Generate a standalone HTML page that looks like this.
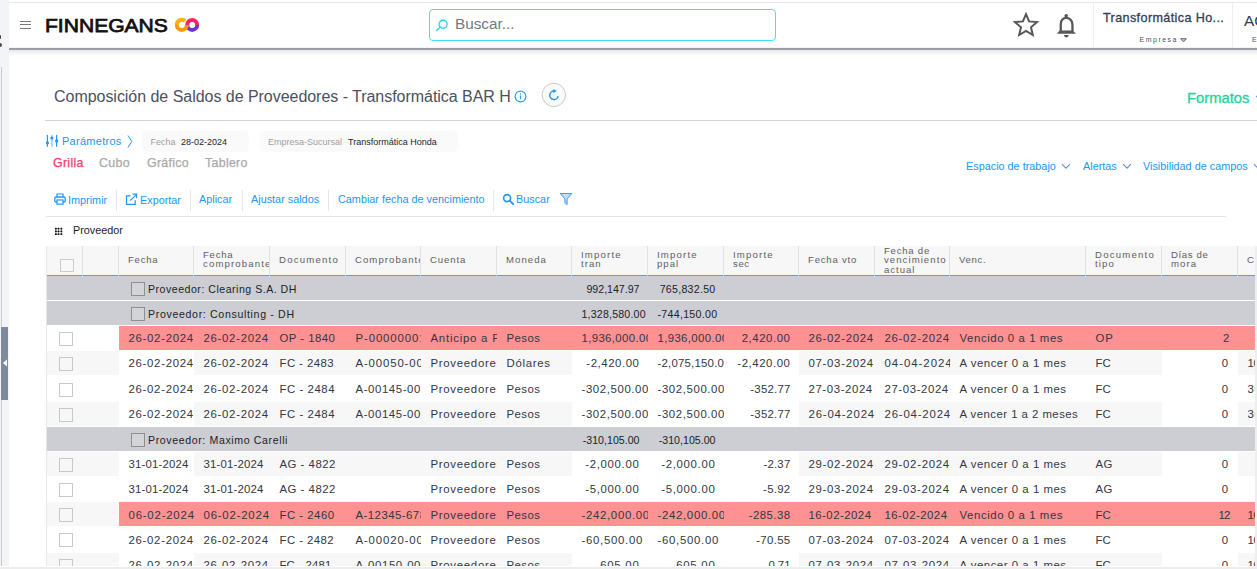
<!DOCTYPE html>
<html><head><meta charset="utf-8">
<style>
*{box-sizing:border-box;margin:0;padding:0}
html,body{width:1257px;height:569px;overflow:hidden;background:#fff;font-family:"Liberation Sans",sans-serif;position:relative}
.a{position:absolute}
#strip{position:absolute;left:0;top:0;width:9px;height:569px;background:#f3f4f8}
#stripline{position:absolute;left:1px;top:67px;width:1px;height:502px;background:#c9c9cc}
#tab{position:absolute;left:1px;top:327px;width:7px;height:73px;background:#7e8b9c}
#hdr{position:absolute;left:9px;top:0;width:1248px;height:48px;background:#fff;border-top:2px solid #fff}
#hdrtop{position:absolute;left:9px;top:2px;width:1248px;height:1px;background:#e5e7ef}
#hdrbot{position:absolute;left:9px;top:48px;width:1248px;height:2px;background:#9a9ea7;box-shadow:0 -1px 1px #f3f3f5}
#hdrshadow{position:absolute;left:9px;top:50px;width:1248px;height:6px;background:linear-gradient(#e9e9eb,#fff)}
.ham{position:absolute;left:20px;width:11px;height:1px;background:#7a7a7a}
#logo{position:absolute;left:44.5px;top:15.5px;font-weight:400;font-size:18px;color:#111;-webkit-text-stroke:.75px #111;line-height:20px;transform:scaleX(1.17);transform-origin:0 0}
#search{position:absolute;left:429px;top:9px;width:347px;height:32px;border:1px solid #3fe0f6;border-radius:4px}
#searchtxt{position:absolute;left:455px;top:14.8px;font-size:15.3px;letter-spacing:0;color:#737983;line-height:17px}
.vdiv{position:absolute;top:3px;width:1px;height:45px;background:#eceef2}
#comp{position:absolute;left:1103px;top:11px;font-size:12.6px;font-weight:400;letter-spacing:.38px;-webkit-text-stroke:.3px #333d52;color:#333d52;line-height:14px;white-space:nowrap}
#emp{position:absolute;left:1139.5px;top:36px;font-size:7px;color:#4a5163;letter-spacing:1.5px;line-height:8px}
#title{position:absolute;left:54px;top:88px;font-size:16px;letter-spacing:-.035px;color:#4a5160;line-height:18px;white-space:nowrap}
#titleline{position:absolute;left:45px;top:120px;width:1212px;height:1px;background:#d3d6dc}
#formatos{position:absolute;left:1187px;top:89.5px;font-size:14.8px;color:#1fd39c;line-height:16px;-webkit-text-stroke:.3px #1fd39c}
.link{position:absolute;color:#2196f3;font-size:10.85px;line-height:13px;white-space:nowrap}
.chip{position:absolute;top:131px;height:21px;background:#fafafa;border-radius:5px}
.chiplbl{position:absolute;top:137px;font-size:9px;color:#a0a0a0;line-height:11px;white-space:nowrap}
.chipval{position:absolute;top:137px;font-size:9px;color:#262626;line-height:11px;white-space:nowrap}
.tabt{position:absolute;top:155.7px;font-size:12.4px;color:#a9a9a9;line-height:14px;letter-spacing:.3px;-webkit-text-stroke:.25px currentColor}
.tsep{position:absolute;top:190px;width:1px;height:21px;background:#e6e6e6}
#tbline{position:absolute;left:46px;top:216px;width:1180px;height:1px;background:#e4e4e4}
#prov{position:absolute;left:73px;top:224.2px;font-size:10.8px;color:#1e1e1e;line-height:13px}
/* table */
#tbl{position:absolute;left:0;top:0;width:1255px;height:566px;overflow:hidden}
#tleft{position:absolute;left:46px;top:246px;width:1px;height:320px;background:#e8e8e8}
.thead{position:absolute;background:#f7f7f7}
.hsep{position:absolute;top:246px;width:1px;height:29px;background:#e2e2e5}
#cyan{position:absolute;left:47px;top:275px;width:1210px;height:2px;background:#14bdf0}
.hcb{position:absolute;width:14px;height:13px;border:1px solid #cbcbcf;background:#f9f9f9}
.hcell{position:absolute;font-size:9.6px;color:#606060;line-height:9.7px;white-space:nowrap;overflow:hidden}
.hcell.l1{top:254.9px}
.hcell.l2{top:249.7px}
.hcell.l3{top:245.6px}
.grow{position:absolute;left:47px;width:1210px;height:23.7px;background:#cdced3}
.gcb{position:absolute;left:84px;top:6px;width:14px;height:14px;border:1px solid #8f8f92;background:#d3d4d8}
.gtxt{position:absolute;left:101px;top:7.2px;font-size:10.6px;color:#202226;line-height:13px;white-space:nowrap}
.gnum{position:absolute;height:23.7px;font-size:11px;color:#202226;line-height:13px;padding-top:7.5px;text-align:right;letter-spacing:.3px;white-space:nowrap}
.drow{position:absolute;left:47px;width:1210px;height:24.09px}
.redbg{position:absolute;left:119px;width:1138px;height:24.09px;background:#fe9191}
.wcol{position:absolute;height:24.09px;background:#fff}
.rcb{position:absolute;left:59px;width:14px;height:14px;border:1px solid #c8c8cc}
.dcell{position:absolute;height:24.09px;overflow:hidden;white-space:nowrap;font-size:11.4px;color:#323843;line-height:13px;padding:5.6px 8.5px 0 9.5px}
.dcell.gn{font-size:10.6px;color:#202226;padding-top:7.2px}
.dcell.r{text-align:right}
</style></head><body>
<div id="strip"></div>
<div id="stripline"></div>
<div id="tab"></div>
<svg class="a" style="left:2px;top:358px" width="6" height="10"><path d="M1 5 L5 1.5 L5 8.5 Z" fill="#fff"/></svg>
<div class="a" style="left:0;top:34.5px;width:1.4px;height:4px;background:#444;border-radius:0 1px 1px 0"></div>
<div class="a" style="left:0;top:42.5px;width:2px;height:4.5px;background:#5a4444;border-radius:0 2px 2px 0"></div>

<div id="hdr"></div>
<div id="hdrtop"></div>
<div id="hdrbot"></div>
<div id="hdrshadow"></div>
<div class="ham" style="top:21px"></div>
<div class="ham" style="top:24px"></div>
<div class="ham" style="top:28px"></div>
<div id="logo">FINNEGANS</div>
<svg class="a" style="left:170px;top:12px" width="32" height="26" viewBox="0 0 32 26">
  <path d="M17.2 12.9 A5 5 0 0 1 27.2 12.9" fill="none" stroke="#f4246b" stroke-width="4"/>
  <path d="M27.2 12.9 A5 5 0 0 1 17.2 12.9" fill="none" stroke="#6c37d0" stroke-width="4"/>
  <path d="M15.1 9.1 A5 5 0 0 0 6.8 12.9" fill="none" stroke="#ffb300" stroke-width="4"/>
  <path d="M6.8 12.9 A5 5 0 0 0 16.8 12.9" fill="none" stroke="#ff9800" stroke-width="4"/>
</svg>

<div id="search"></div>
<svg class="a" style="left:435px;top:19px" width="14" height="14" viewBox="0 0 14 14">
  <circle cx="8.1" cy="5.2" r="4" fill="none" stroke="#22d2f5" stroke-width="1.35"/>
  <path d="M5.2 8.2 L1.5 11.6" stroke="#22d2f5" stroke-width="1.35" stroke-linecap="round"/>
</svg>
<div id="searchtxt">Buscar...</div>

<svg class="a" style="left:1012px;top:11.8px" width="28" height="27" viewBox="0 0 28 27">
  <path d="M14 2.2 L17.1 9.4 L25 10.1 L19 15.3 L20.8 23 L14 19 L7.2 23 L9 15.3 L3 10.1 L10.9 9.4 Z" fill="none" stroke="#565656" stroke-width="2" stroke-linejoin="miter"/>
</svg>
<svg class="a" style="left:1050px;top:8px" width="32" height="34" viewBox="0 0 32 34">
  <circle cx="16.2" cy="7.7" r="1.8" fill="#575757"/>
  <path d="M10.75 23.5 V16.2 C10.75 12.3 13.2 9.9 16.2 9.9 C19.2 9.9 22.45 12.3 22.45 16.2 V23.5" fill="none" stroke="#575757" stroke-width="2.3"/>
  <path d="M9.6 22.6 H22.8 L26 25.7 H6.9 Z" fill="#575757"/>
  <path d="M13.9 27.1 H18.7 A2.4 2.3 0 0 1 13.9 27.1 Z" fill="#575757"/>
</svg>
<div class="vdiv" style="left:1093px"></div>
<div class="vdiv" style="left:1232px"></div>
<div id="comp">Transformática Ho...</div>
<div id="emp">Empresa</div>
<svg class="a" style="left:1180px;top:37.5px" width="7" height="4.5" viewBox="0 0 7 4.5"><path d="M0.6 0.7 H6.4 L3.5 3.9 Z" fill="#c5c8ce" stroke="#444c5e" stroke-width="0.8"/></svg>
<div class="a" style="left:1244px;top:12px;font-size:15.3px;color:#2e3850;line-height:17px">AC</div>
<div class="a" style="left:1252px;top:36px;font-size:7px;color:#4a5163;line-height:8px">E</div>

<div id="title">Composición de Saldos de Proveedores - Transformática BAR H</div>
<svg class="a" style="left:514px;top:90px" width="13" height="13" viewBox="0 0 13 13">
  <circle cx="6.5" cy="6.5" r="5.4" fill="none" stroke="#2f9cf0" stroke-width="1.2"/>
  <rect x="5.9" y="5.4" width="1.2" height="4" fill="#2f9cf0"/>
  <rect x="5.9" y="3.3" width="1.2" height="1.2" fill="#2f9cf0"/>
</svg>
<svg class="a" style="left:541px;top:82px" width="26" height="26" viewBox="0 0 26 26">
  <circle cx="12.8" cy="12.9" r="11.7" fill="#fafafa" stroke="#cacaca" stroke-width="1"/>
  <path d="M13 9.1 A4.2 4.2 0 1 0 17.14 14.03" fill="none" stroke="#2196f3" stroke-width="1.5"/>
  <path d="M12.4 7.1 L15.9 9.1 L12.4 11.1 Z" fill="#2196f3"/>
</svg>
<div id="titleline"></div>
<div id="formatos">Formatos</div>
<svg class="a" style="left:1255px;top:94px" width="8" height="8"><path d="M1 2 L4 5 L7 2" fill="none" stroke="#6a9fd0" stroke-width="1.2"/></svg>

<!-- parametros -->
<svg class="a" style="left:45px;top:134px" width="14" height="14" viewBox="0 0 14 14">
  <g stroke="#2196f3" stroke-width="1.2">
    <path d="M2.4 1 V12.8"/><path d="M11.6 1 V12.8"/>
  </g>
  <path d="M6.9 1 V12.8" stroke="#8fc6f7" stroke-width="1.4"/>
  <g fill="#2196f3">
    <circle cx="2.4" cy="8.8" r="1.6"/><circle cx="6.9" cy="4" r="1.6"/><circle cx="11.6" cy="6.9" r="1.6"/>
  </g>
</svg>
<div class="link" style="left:62px;top:134.6px;font-size:11px;letter-spacing:.28px">Parámetros</div>
<svg class="a" style="left:126.5px;top:135px" width="6" height="13"><path d="M1 0.5 L4.8 6.5 L1 12.5" fill="none" stroke="#2196f3" stroke-width="1"/></svg>
<div class="chip" style="left:142px;width:107px"></div>
<div class="chiplbl" style="left:150.5px">Fecha</div>
<div class="chipval" style="left:181px">28-02-2024</div>
<div class="chip" style="left:260px;width:198px"></div>
<div class="chiplbl" style="left:268px">Empresa-Sucursal</div>
<div class="chipval" style="left:348px">Transformática Honda</div>

<div class="tabt" style="left:53px;color:#f23d6c">Grilla</div>
<div class="tabt" style="left:99px">Cubo</div>
<div class="tabt" style="left:147px">Gráfico</div>
<div class="tabt" style="left:205px">Tablero</div>

<div class="link" style="left:966px;top:160px">Espacio de trabajo</div>
<svg class="a" style="left:1061px;top:163px" width="10" height="7"><path d="M1 1.2 L5 5.2 L9 1.2" fill="none" stroke="#5f93c8" stroke-width="1.1"/></svg>
<div class="link" style="left:1083px;top:160px">Alertas</div>
<svg class="a" style="left:1122px;top:163px" width="10" height="7"><path d="M1 1.2 L5 5.2 L9 1.2" fill="none" stroke="#5f93c8" stroke-width="1.1"/></svg>
<div class="link" style="left:1143px;top:160px">Visibilidad de campos</div>
<svg class="a" style="left:1253px;top:163px" width="10" height="7"><path d="M1 1.2 L5 5.2 L9 1.2" fill="none" stroke="#5f93c8" stroke-width="1.1"/></svg>

<!-- toolbar -->
<svg class="a" style="left:54px;top:193px" width="12" height="12" viewBox="0 0 12 12">
  <path d="M3 4 V1 H9 V4" fill="none" stroke="#2196f3" stroke-width="1.2"/>
  <rect x="0.8" y="4" width="10.4" height="5" rx="1.2" fill="none" stroke="#2196f3" stroke-width="1.3"/>
  <rect x="3" y="7" width="6" height="4.2" fill="#fff" stroke="#2196f3" stroke-width="1.2"/>
</svg>
<div class="link" style="left:68px;top:194px">Imprimir</div>
<div class="tsep" style="left:116px"></div>
<svg class="a" style="left:125px;top:193px" width="13" height="13" viewBox="0 0 13 13">
  <path d="M5.6 2.8 H1.5 V11.4 H10.2 V7.2" fill="none" stroke="#2196f3" stroke-width="1.2"/>
  <path d="M5.2 7.6 L11 1.8" stroke="#2196f3" stroke-width="1.2"/>
  <path d="M7.6 1.2 H11.6 V5.2" fill="none" stroke="#2196f3" stroke-width="1.2"/>
</svg>
<div class="link" style="left:140px;top:194px">Exportar</div>
<div class="tsep" style="left:190px"></div>
<div class="link" style="left:199px;top:193px">Aplicar</div>
<div class="tsep" style="left:242px"></div>
<div class="link" style="left:251px;top:193px">Ajustar saldos</div>
<div class="tsep" style="left:328px"></div>
<div class="link" style="left:338px;top:193px">Cambiar fecha de vencimiento</div>
<div class="tsep" style="left:493px"></div>
<svg class="a" style="left:502px;top:193px" width="13" height="13" viewBox="0 0 13 13">
  <circle cx="5.1" cy="5.1" r="3.5" fill="none" stroke="#2196f3" stroke-width="1.6"/>
  <path d="M7.7 7.7 L11.2 11.2" stroke="#2196f3" stroke-width="1.8" stroke-linecap="round"/>
</svg>
<div class="link" style="left:516px;top:193px">Buscar</div>
<svg class="a" style="left:559px;top:192px" width="14" height="14" viewBox="0 0 14 14">
  <path d="M1.2 1.5 H12.8 L8.1 6.9 V12.6 L5.9 10.7 V6.9 Z" fill="#c2ddf8" stroke="#3a9bf0" stroke-width="1" stroke-linejoin="round"/>
</svg>
<div id="tbline"></div>

<svg class="a" style="left:52px;top:224px" width="14" height="14" viewBox="0 0 14 14">
  <g stroke="#c4c4c4" stroke-width="0.9"><path d="M3.8 4.6 H9.4 M3.8 7.4 H9.4 M3.8 10.1 H9.4 M3.8 4.6 V10.1 M6.5 4.6 V10.1 M9.4 4.6 V10.1"/></g>
  <g fill="#111">
    <rect x="2.9" y="3.7" width="1.9" height="1.8" rx=".5"/><rect x="5.6" y="3.7" width="1.8" height="1.8" rx=".5"/><rect x="8.5" y="3.7" width="1.8" height="1.8" rx=".5"/>
    <rect x="2.9" y="6.5" width="1.9" height="1.8" rx=".5"/><rect x="5.6" y="6.5" width="1.8" height="1.8" rx=".5"/><rect x="8.5" y="6.5" width="1.8" height="1.8" rx=".5"/>
    <rect x="2.9" y="9.2" width="1.9" height="1.9" rx=".5"/><rect x="5.6" y="9.2" width="1.8" height="1.9" rx=".5"/><rect x="8.5" y="9.2" width="1.8" height="1.9" rx=".5"/>
  </g>
</svg>
<div id="prov">Proveedor</div>

<div id="tbl">
<div id="tleft"></div>
<div id="cyan"></div>
<div class="thead" style="left:46.5px;top:246px;width:1210px;height:29px"></div>
<div class="hcb" style="left:60px;top:259px"></div>
<div class="hsep" style="left:82.00px"></div>
<div class="a" style="left:82.00px;top:275px;width:1px;height:1.6px;background:#a8dcef;z-index:2"></div>
<div class="hcell l1" style="left:92.00px;width:26.00px"></div>
<div class="hsep" style="left:118.00px"></div>
<div class="a" style="left:118.00px;top:275px;width:1px;height:1.6px;background:#a8dcef;z-index:2"></div>
<div class="hcell l1" style="left:128.00px;width:65.00px"><span style="letter-spacing:0.74px">Fecha</span></div>
<div class="hsep" style="left:193.00px"></div>
<div class="a" style="left:193.00px;top:275px;width:1px;height:1.6px;background:#a8dcef;z-index:2"></div>
<div class="hcell l2" style="left:203.00px;width:66.00px"><span style="letter-spacing:0.74px">Fecha</span><br><span style="letter-spacing:1.13px">comprobante</span></div>
<div class="hsep" style="left:269.00px"></div>
<div class="a" style="left:269.00px;top:275px;width:1px;height:1.6px;background:#a8dcef;z-index:2"></div>
<div class="hcell l1" style="left:279.00px;width:66.00px"><span style="letter-spacing:1.21px">Documento</span></div>
<div class="hsep" style="left:345.00px"></div>
<div class="a" style="left:345.00px;top:275px;width:1px;height:1.6px;background:#a8dcef;z-index:2"></div>
<div class="hcell l1" style="left:355.00px;width:65.00px"><span style="letter-spacing:1.05px">Comprobante</span></div>
<div class="hsep" style="left:420.00px"></div>
<div class="a" style="left:420.00px;top:275px;width:1px;height:1.6px;background:#a8dcef;z-index:2"></div>
<div class="hcell l1" style="left:430.00px;width:66.00px"><span style="letter-spacing:0.88px">Cuenta</span></div>
<div class="hsep" style="left:496.00px"></div>
<div class="a" style="left:496.00px;top:275px;width:1px;height:1.6px;background:#a8dcef;z-index:2"></div>
<div class="hcell l1" style="left:506.00px;width:65.00px"><span style="letter-spacing:1.04px">Moneda</span></div>
<div class="hsep" style="left:571.00px"></div>
<div class="a" style="left:571.00px;top:275px;width:1px;height:1.6px;background:#a8dcef;z-index:2"></div>
<div class="hcell l2" style="left:581.00px;width:66.00px"><span style="letter-spacing:1.19px">Importe</span><br><span style="letter-spacing:1.01px">tran</span></div>
<div class="hsep" style="left:647.00px"></div>
<div class="a" style="left:647.00px;top:275px;width:1px;height:1.6px;background:#a8dcef;z-index:2"></div>
<div class="hcell l2" style="left:657.00px;width:66.00px"><span style="letter-spacing:1.19px">Importe</span><br><span style="letter-spacing:1.03px">ppal</span></div>
<div class="hsep" style="left:723.00px"></div>
<div class="a" style="left:723.00px;top:275px;width:1px;height:1.6px;background:#a8dcef;z-index:2"></div>
<div class="hcell l2" style="left:733.00px;width:65.00px"><span style="letter-spacing:1.19px">Importe</span><br><span style="letter-spacing:0.58px">sec</span></div>
<div class="hsep" style="left:798.00px"></div>
<div class="a" style="left:798.00px;top:275px;width:1px;height:1.6px;background:#a8dcef;z-index:2"></div>
<div class="hcell l1" style="left:808.00px;width:66.00px"><span style="letter-spacing:0.77px">Fecha vto</span></div>
<div class="hsep" style="left:874.00px"></div>
<div class="a" style="left:874.00px;top:275px;width:1px;height:1.6px;background:#a8dcef;z-index:2"></div>
<div class="hcell l3" style="left:884.00px;width:65.00px"><span style="letter-spacing:0.75px">Fecha de</span><br><span style="letter-spacing:1.05px">vencimiento</span><br><span style="letter-spacing:0.95px">actual</span></div>
<div class="hsep" style="left:949.00px"></div>
<div class="a" style="left:949.00px;top:275px;width:1px;height:1.6px;background:#a8dcef;z-index:2"></div>
<div class="hcell l1" style="left:959.00px;width:126.00px"><span style="letter-spacing:0.67px">Venc.</span></div>
<div class="hsep" style="left:1085.00px"></div>
<div class="a" style="left:1085.00px;top:275px;width:1px;height:1.6px;background:#a8dcef;z-index:2"></div>
<div class="hcell l2" style="left:1095.00px;width:66.00px"><span style="letter-spacing:1.21px">Documento</span><br><span style="letter-spacing:1.16px">tipo</span></div>
<div class="hsep" style="left:1161.00px"></div>
<div class="a" style="left:1161.00px;top:275px;width:1px;height:1.6px;background:#a8dcef;z-index:2"></div>
<div class="hcell l2" style="left:1171.00px;width:66.00px"><span style="letter-spacing:0.63px">Días de</span><br><span style="letter-spacing:1.09px">mora</span></div>
<div class="hsep" style="left:1237.00px"></div>
<div class="a" style="left:1237.00px;top:275px;width:1px;height:1.6px;background:#a8dcef;z-index:2"></div>
<div class="hcell l1" style="left:1247.00px;width:66.00px"><span style="letter-spacing:0.08px">C</span></div>
<div class="grow" style="top:276.00px"><span class="gcb"></span><span class="gtxt"><span style="letter-spacing:0.50px">Proveedor: Clearing S.A. DH</span></span></div>
<div class="dcell r gn" style="top:276.00px;left:572.00px;width:76.00px"><span style="letter-spacing:0.00px">992,147.97</span></div>
<div class="dcell r gn" style="top:276.00px;left:648.00px;width:76.00px"><span style="letter-spacing:0.28px">765,832.50</span></div>
<div class="grow" style="top:301.14px"><span class="gcb"></span><span class="gtxt"><span style="letter-spacing:0.66px">Proveedor: Consulting - DH</span></span></div>
<div class="dcell r gn" style="top:301.14px;left:572.00px;width:76.00px"><span style="letter-spacing:0.20px">1,328,580.00</span></div>
<div class="dcell r gn" style="top:301.14px;left:648.00px;width:76.00px"><span style="letter-spacing:0.30px">-744,150.00</span></div>
<div class="drow" style="top:326.28px;background:#ffffff"></div>
<div class="redbg" style="top:326.28px"></div>
<div class="rcb" style="top:332.28px"></div>
<div class="dcell k2" style="top:326.28px;left:119.00px;width:75.00px;padding-top:6.02px"><span style="letter-spacing:0.70px">26-02-2024</span></div>
<div class="dcell k3" style="top:326.28px;left:194.00px;width:76.00px;padding-top:6.02px"><span style="letter-spacing:0.70px">26-02-2024</span></div>
<div class="dcell k4" style="top:326.28px;left:270.00px;width:76.00px;padding-top:6.02px"><span style="letter-spacing:0.46px">OP - 1840</span></div>
<div class="dcell k5" style="top:326.28px;left:346.00px;width:75.00px;padding-top:6.02px"><span style="letter-spacing:0.89px">P-00000001</span></div>
<div class="dcell k6" style="top:326.28px;left:421.00px;width:76.00px;padding-top:6.02px"><span style="letter-spacing:0.77px">Anticipo a Proveedores</span></div>
<div class="dcell k7" style="top:326.28px;left:497.00px;width:75.00px;padding-top:6.02px"><span style="letter-spacing:0.45px">Pesos</span></div>
<div class="dcell r k8" style="top:326.28px;left:572.00px;width:76.00px;padding-top:6.02px"><span style="letter-spacing:0.36px">1,936,000.00</span></div>
<div class="dcell r k9" style="top:326.28px;left:648.00px;width:76.00px;padding-top:6.02px"><span style="letter-spacing:0.36px">1,936,000.00</span></div>
<div class="dcell r k10" style="top:326.28px;left:724.00px;width:75.00px;padding-top:6.02px"><span style="letter-spacing:0.56px">2,420.00</span></div>
<div class="dcell k11" style="top:326.28px;left:799.00px;width:76.00px;padding-top:6.02px"><span style="letter-spacing:0.70px">26-02-2024</span></div>
<div class="dcell k12" style="top:326.28px;left:875.00px;width:75.00px;padding-top:6.02px"><span style="letter-spacing:0.70px">26-02-2024</span></div>
<div class="dcell k13" style="top:326.28px;left:950.00px;width:136.00px;padding-top:6.02px"><span style="letter-spacing:0.58px">Vencido 0 a 1 mes</span></div>
<div class="dcell k14" style="top:326.28px;left:1086.00px;width:76.00px;padding-top:6.02px"><span style="letter-spacing:0.77px">OP</span></div>
<div class="dcell r k15" style="top:326.28px;left:1162.00px;width:76.00px;padding-top:6.02px"><span style="letter-spacing:0.28px">2</span></div>
<div class="drow" style="top:351.42px;background:#f7f7f7"></div>
<div class="wcol" style="top:351.42px;left:119.00px;width:75.00px"></div>
<div class="wcol" style="top:351.42px;left:572.00px;width:76.00px"></div>
<div class="wcol" style="top:351.42px;left:648.00px;width:76.00px"></div>
<div class="wcol" style="top:351.42px;left:724.00px;width:75.00px"></div>
<div class="wcol" style="top:351.42px;left:1162.00px;width:76.00px"></div>
<div class="rcb" style="top:357.42px"></div>
<div class="dcell k2" style="top:351.42px;left:119.00px;width:75.00px;padding-top:6.08px"><span style="letter-spacing:0.70px">26-02-2024</span></div>
<div class="dcell k3" style="top:351.42px;left:194.00px;width:76.00px;padding-top:6.08px"><span style="letter-spacing:0.70px">26-02-2024</span></div>
<div class="dcell k4" style="top:351.42px;left:270.00px;width:76.00px;padding-top:6.08px"><span style="letter-spacing:0.42px">FC - 2483</span></div>
<div class="dcell k5" style="top:351.42px;left:346.00px;width:75.00px;padding-top:6.08px"><span style="letter-spacing:0.86px">A-00050-00001</span></div>
<div class="dcell k6" style="top:351.42px;left:421.00px;width:76.00px;padding-top:6.08px"><span style="letter-spacing:0.71px">Proveedores</span></div>
<div class="dcell k7" style="top:351.42px;left:497.00px;width:75.00px;padding-top:6.08px"><span style="letter-spacing:0.72px">Dólares</span></div>
<div class="dcell r k8" style="top:351.42px;left:572.00px;width:76.00px;padding-top:6.08px"><span style="letter-spacing:0.56px">-2,420.00</span></div>
<div class="dcell r k9" style="top:351.42px;left:648.00px;width:76.00px;padding-top:6.08px"><span style="letter-spacing:0.22px">-2,075,150.00</span></div>
<div class="dcell r k10" style="top:351.42px;left:724.00px;width:75.00px;padding-top:6.08px"><span style="letter-spacing:0.56px">-2,420.00</span></div>
<div class="dcell k11" style="top:351.42px;left:799.00px;width:76.00px;padding-top:6.08px"><span style="letter-spacing:0.70px">07-03-2024</span></div>
<div class="dcell k12" style="top:351.42px;left:875.00px;width:75.00px;padding-top:6.08px"><span style="letter-spacing:0.99px">04-04-2024</span></div>
<div class="dcell k13" style="top:351.42px;left:950.00px;width:136.00px;padding-top:6.08px"><span style="letter-spacing:0.53px">A vencer 0 a 1 mes</span></div>
<div class="dcell k14" style="top:351.42px;left:1086.00px;width:76.00px;padding-top:6.08px"><span style="letter-spacing:0.15px">FC</span></div>
<div class="dcell r k15" style="top:351.42px;left:1162.00px;width:76.00px;padding-top:6.08px"><span style="letter-spacing:1.34px">0</span></div>
<div class="dcell k16" style="top:351.42px;left:1238.00px;width:76.00px;padding-top:6.08px"><span style="letter-spacing:-0.35px">10</span></div>
<div class="drow" style="top:376.56px;background:#ffffff"></div>
<div class="rcb" style="top:382.56px"></div>
<div class="dcell k2" style="top:376.56px;left:119.00px;width:75.00px;padding-top:6.14px"><span style="letter-spacing:0.70px">26-02-2024</span></div>
<div class="dcell k3" style="top:376.56px;left:194.00px;width:76.00px;padding-top:6.14px"><span style="letter-spacing:0.70px">26-02-2024</span></div>
<div class="dcell k4" style="top:376.56px;left:270.00px;width:76.00px;padding-top:6.14px"><span style="letter-spacing:0.54px">FC - 2484</span></div>
<div class="dcell k5" style="top:376.56px;left:346.00px;width:75.00px;padding-top:6.14px"><span style="letter-spacing:0.59px">A-00145-00001</span></div>
<div class="dcell k6" style="top:376.56px;left:421.00px;width:76.00px;padding-top:6.14px"><span style="letter-spacing:0.71px">Proveedores</span></div>
<div class="dcell k7" style="top:376.56px;left:497.00px;width:75.00px;padding-top:6.14px"><span style="letter-spacing:0.45px">Pesos</span></div>
<div class="dcell r k8" style="top:376.56px;left:572.00px;width:76.00px;padding-top:6.14px"><span style="letter-spacing:0.61px">-302,500.00</span></div>
<div class="dcell r k9" style="top:376.56px;left:648.00px;width:76.00px;padding-top:6.14px"><span style="letter-spacing:0.61px">-302,500.00</span></div>
<div class="dcell r k10" style="top:376.56px;left:724.00px;width:75.00px;padding-top:6.14px"><span style="letter-spacing:0.22px">-352.77</span></div>
<div class="dcell k11" style="top:376.56px;left:799.00px;width:76.00px;padding-top:6.14px"><span style="letter-spacing:0.60px">27-03-2024</span></div>
<div class="dcell k12" style="top:376.56px;left:875.00px;width:75.00px;padding-top:6.14px"><span style="letter-spacing:0.60px">27-03-2024</span></div>
<div class="dcell k13" style="top:376.56px;left:950.00px;width:136.00px;padding-top:6.14px"><span style="letter-spacing:0.53px">A vencer 0 a 1 mes</span></div>
<div class="dcell k14" style="top:376.56px;left:1086.00px;width:76.00px;padding-top:6.14px"><span style="letter-spacing:0.15px">FC</span></div>
<div class="dcell r k15" style="top:376.56px;left:1162.00px;width:76.00px;padding-top:6.14px"><span style="letter-spacing:1.34px">0</span></div>
<div class="dcell k16" style="top:376.56px;left:1238.00px;width:76.00px;padding-top:6.14px"><span style="letter-spacing:0.79px">30</span></div>
<div class="drow" style="top:401.70px;background:#f7f7f7"></div>
<div class="wcol" style="top:401.70px;left:119.00px;width:75.00px"></div>
<div class="wcol" style="top:401.70px;left:572.00px;width:76.00px"></div>
<div class="wcol" style="top:401.70px;left:648.00px;width:76.00px"></div>
<div class="wcol" style="top:401.70px;left:724.00px;width:75.00px"></div>
<div class="wcol" style="top:401.70px;left:1162.00px;width:76.00px"></div>
<div class="rcb" style="top:407.70px"></div>
<div class="dcell k2" style="top:401.70px;left:119.00px;width:75.00px;padding-top:6.20px"><span style="letter-spacing:0.70px">26-02-2024</span></div>
<div class="dcell k3" style="top:401.70px;left:194.00px;width:76.00px;padding-top:6.20px"><span style="letter-spacing:0.70px">26-02-2024</span></div>
<div class="dcell k4" style="top:401.70px;left:270.00px;width:76.00px;padding-top:6.20px"><span style="letter-spacing:0.54px">FC - 2484</span></div>
<div class="dcell k5" style="top:401.70px;left:346.00px;width:75.00px;padding-top:6.20px"><span style="letter-spacing:0.59px">A-00145-00001</span></div>
<div class="dcell k6" style="top:401.70px;left:421.00px;width:76.00px;padding-top:6.20px"><span style="letter-spacing:0.71px">Proveedores</span></div>
<div class="dcell k7" style="top:401.70px;left:497.00px;width:75.00px;padding-top:6.20px"><span style="letter-spacing:0.45px">Pesos</span></div>
<div class="dcell r k8" style="top:401.70px;left:572.00px;width:76.00px;padding-top:6.20px"><span style="letter-spacing:0.61px">-302,500.00</span></div>
<div class="dcell r k9" style="top:401.70px;left:648.00px;width:76.00px;padding-top:6.20px"><span style="letter-spacing:0.61px">-302,500.00</span></div>
<div class="dcell r k10" style="top:401.70px;left:724.00px;width:75.00px;padding-top:6.20px"><span style="letter-spacing:0.22px">-352.77</span></div>
<div class="dcell k11" style="top:401.70px;left:799.00px;width:76.00px;padding-top:6.20px"><span style="letter-spacing:0.82px">26-04-2024</span></div>
<div class="dcell k12" style="top:401.70px;left:875.00px;width:75.00px;padding-top:6.20px"><span style="letter-spacing:0.82px">26-04-2024</span></div>
<div class="dcell k13" style="top:401.70px;left:950.00px;width:136.00px;padding-top:6.20px"><span style="letter-spacing:0.46px">A vencer 1 a 2 meses</span></div>
<div class="dcell k14" style="top:401.70px;left:1086.00px;width:76.00px;padding-top:6.20px"><span style="letter-spacing:0.15px">FC</span></div>
<div class="dcell r k15" style="top:401.70px;left:1162.00px;width:76.00px;padding-top:6.20px"><span style="letter-spacing:1.34px">0</span></div>
<div class="dcell k16" style="top:401.70px;left:1238.00px;width:76.00px;padding-top:6.20px"><span style="letter-spacing:0.79px">30</span></div>
<div class="grow" style="top:426.84px"><span class="gcb"></span><span class="gtxt"><span style="letter-spacing:0.61px">Proveedor: Maximo Carelli</span></span></div>
<div class="dcell r gn" style="top:426.84px;left:572.00px;width:76.00px"><span style="letter-spacing:0.02px">-310,105.00</span></div>
<div class="dcell r gn" style="top:426.84px;left:648.00px;width:76.00px"><span style="letter-spacing:0.02px">-310,105.00</span></div>
<div class="drow" style="top:451.98px;background:#f7f7f7"></div>
<div class="wcol" style="top:451.98px;left:119.00px;width:75.00px"></div>
<div class="wcol" style="top:451.98px;left:572.00px;width:76.00px"></div>
<div class="wcol" style="top:451.98px;left:648.00px;width:76.00px"></div>
<div class="wcol" style="top:451.98px;left:724.00px;width:75.00px"></div>
<div class="wcol" style="top:451.98px;left:1162.00px;width:76.00px"></div>
<div class="rcb" style="top:457.98px"></div>
<div class="dcell k2" style="top:451.98px;left:119.00px;width:75.00px;padding-top:6.32px"><span style="letter-spacing:0.18px">31-01-2024</span></div>
<div class="dcell k3" style="top:451.98px;left:194.00px;width:76.00px;padding-top:6.32px"><span style="letter-spacing:0.18px">31-01-2024</span></div>
<div class="dcell k4" style="top:451.98px;left:270.00px;width:76.00px;padding-top:6.32px"><span style="letter-spacing:0.50px">AG - 4822</span></div>
<div class="dcell k6" style="top:451.98px;left:421.00px;width:76.00px;padding-top:6.32px"><span style="letter-spacing:0.71px">Proveedores</span></div>
<div class="dcell k7" style="top:451.98px;left:497.00px;width:75.00px;padding-top:6.32px"><span style="letter-spacing:0.45px">Pesos</span></div>
<div class="dcell r k8" style="top:451.98px;left:572.00px;width:76.00px;padding-top:6.32px"><span style="letter-spacing:0.69px">-2,000.00</span></div>
<div class="dcell r k9" style="top:451.98px;left:648.00px;width:76.00px;padding-top:6.32px"><span style="letter-spacing:0.69px">-2,000.00</span></div>
<div class="dcell r k10" style="top:451.98px;left:724.00px;width:75.00px;padding-top:6.32px"><span style="letter-spacing:0.23px">-2.37</span></div>
<div class="dcell k11" style="top:451.98px;left:799.00px;width:76.00px;padding-top:6.32px"><span style="letter-spacing:0.70px">29-02-2024</span></div>
<div class="dcell k12" style="top:451.98px;left:875.00px;width:75.00px;padding-top:6.32px"><span style="letter-spacing:0.70px">29-02-2024</span></div>
<div class="dcell k13" style="top:451.98px;left:950.00px;width:136.00px;padding-top:6.32px"><span style="letter-spacing:0.53px">A vencer 0 a 1 mes</span></div>
<div class="dcell k14" style="top:451.98px;left:1086.00px;width:76.00px;padding-top:6.32px"><span style="letter-spacing:0.33px">AG</span></div>
<div class="dcell r k15" style="top:451.98px;left:1162.00px;width:76.00px;padding-top:6.32px"><span style="letter-spacing:1.34px">0</span></div>
<div class="drow" style="top:477.12px;background:#ffffff"></div>
<div class="rcb" style="top:483.12px"></div>
<div class="dcell k2" style="top:477.12px;left:119.00px;width:75.00px;padding-top:6.38px"><span style="letter-spacing:0.18px">31-01-2024</span></div>
<div class="dcell k3" style="top:477.12px;left:194.00px;width:76.00px;padding-top:6.38px"><span style="letter-spacing:0.18px">31-01-2024</span></div>
<div class="dcell k4" style="top:477.12px;left:270.00px;width:76.00px;padding-top:6.38px"><span style="letter-spacing:0.50px">AG - 4822</span></div>
<div class="dcell k6" style="top:477.12px;left:421.00px;width:76.00px;padding-top:6.38px"><span style="letter-spacing:0.71px">Proveedores</span></div>
<div class="dcell k7" style="top:477.12px;left:497.00px;width:75.00px;padding-top:6.38px"><span style="letter-spacing:0.45px">Pesos</span></div>
<div class="dcell r k8" style="top:477.12px;left:572.00px;width:76.00px;padding-top:6.38px"><span style="letter-spacing:0.69px">-5,000.00</span></div>
<div class="dcell r k9" style="top:477.12px;left:648.00px;width:76.00px;padding-top:6.38px"><span style="letter-spacing:0.69px">-5,000.00</span></div>
<div class="dcell r k10" style="top:477.12px;left:724.00px;width:75.00px;padding-top:6.38px"><span style="letter-spacing:0.29px">-5.92</span></div>
<div class="dcell k11" style="top:477.12px;left:799.00px;width:76.00px;padding-top:6.38px"><span style="letter-spacing:0.69px">29-03-2024</span></div>
<div class="dcell k12" style="top:477.12px;left:875.00px;width:75.00px;padding-top:6.38px"><span style="letter-spacing:0.69px">29-03-2024</span></div>
<div class="dcell k13" style="top:477.12px;left:950.00px;width:136.00px;padding-top:6.38px"><span style="letter-spacing:0.53px">A vencer 0 a 1 mes</span></div>
<div class="dcell k14" style="top:477.12px;left:1086.00px;width:76.00px;padding-top:6.38px"><span style="letter-spacing:0.33px">AG</span></div>
<div class="dcell r k15" style="top:477.12px;left:1162.00px;width:76.00px;padding-top:6.38px"><span style="letter-spacing:1.34px">0</span></div>
<div class="drow" style="top:502.26px;background:#f7f7f7"></div>
<div class="redbg" style="top:502.26px"></div>
<div class="rcb" style="top:508.26px"></div>
<div class="dcell k2" style="top:502.26px;left:119.00px;width:75.00px;padding-top:6.44px"><span style="letter-spacing:0.80px">06-02-2024</span></div>
<div class="dcell k3" style="top:502.26px;left:194.00px;width:76.00px;padding-top:6.44px"><span style="letter-spacing:0.80px">06-02-2024</span></div>
<div class="dcell k4" style="top:502.26px;left:270.00px;width:76.00px;padding-top:6.44px"><span style="letter-spacing:0.49px">FC - 2460</span></div>
<div class="dcell k5" style="top:502.26px;left:346.00px;width:75.00px;padding-top:6.44px"><span style="letter-spacing:0.46px">A-12345-67890</span></div>
<div class="dcell k6" style="top:502.26px;left:421.00px;width:76.00px;padding-top:6.44px"><span style="letter-spacing:0.71px">Proveedores</span></div>
<div class="dcell k7" style="top:502.26px;left:497.00px;width:75.00px;padding-top:6.44px"><span style="letter-spacing:0.45px">Pesos</span></div>
<div class="dcell r k8" style="top:502.26px;left:572.00px;width:76.00px;padding-top:6.44px"><span style="letter-spacing:0.68px">-242,000.00</span></div>
<div class="dcell r k9" style="top:502.26px;left:648.00px;width:76.00px;padding-top:6.44px"><span style="letter-spacing:0.68px">-242,000.00</span></div>
<div class="dcell r k10" style="top:502.26px;left:724.00px;width:75.00px;padding-top:6.44px"><span style="letter-spacing:0.44px">-285.38</span></div>
<div class="dcell k11" style="top:502.26px;left:799.00px;width:76.00px;padding-top:6.44px"><span style="letter-spacing:0.47px">16-02-2024</span></div>
<div class="dcell k12" style="top:502.26px;left:875.00px;width:75.00px;padding-top:6.44px"><span style="letter-spacing:0.47px">16-02-2024</span></div>
<div class="dcell k13" style="top:502.26px;left:950.00px;width:136.00px;padding-top:6.44px"><span style="letter-spacing:0.58px">Vencido 0 a 1 mes</span></div>
<div class="dcell k14" style="top:502.26px;left:1086.00px;width:76.00px;padding-top:6.44px"><span style="letter-spacing:0.15px">FC</span></div>
<div class="dcell r k15" style="top:502.26px;left:1162.00px;width:76.00px;padding-top:6.44px"><span style="letter-spacing:-0.88px">12</span></div>
<div class="dcell k16" style="top:502.26px;left:1238.00px;width:76.00px;padding-top:6.44px"><span style="letter-spacing:-0.35px">10</span></div>
<div class="drow" style="top:527.40px;background:#ffffff"></div>
<div class="rcb" style="top:533.40px"></div>
<div class="dcell k2" style="top:527.40px;left:119.00px;width:75.00px;padding-top:6.50px"><span style="letter-spacing:0.70px">26-02-2024</span></div>
<div class="dcell k3" style="top:527.40px;left:194.00px;width:76.00px;padding-top:6.50px"><span style="letter-spacing:0.70px">26-02-2024</span></div>
<div class="dcell k4" style="top:527.40px;left:270.00px;width:76.00px;padding-top:6.50px"><span style="letter-spacing:0.43px">FC - 2482</span></div>
<div class="dcell k5" style="top:527.40px;left:346.00px;width:75.00px;padding-top:6.50px"><span style="letter-spacing:0.86px">A-00020-00001</span></div>
<div class="dcell k6" style="top:527.40px;left:421.00px;width:76.00px;padding-top:6.50px"><span style="letter-spacing:0.71px">Proveedores</span></div>
<div class="dcell k7" style="top:527.40px;left:497.00px;width:75.00px;padding-top:6.50px"><span style="letter-spacing:0.45px">Pesos</span></div>
<div class="dcell r k8" style="top:527.40px;left:572.00px;width:76.00px;padding-top:6.50px"><span style="letter-spacing:0.70px">-60,500.00</span></div>
<div class="dcell r k9" style="top:527.40px;left:648.00px;width:76.00px;padding-top:6.50px"><span style="letter-spacing:0.70px">-60,500.00</span></div>
<div class="dcell r k10" style="top:527.40px;left:724.00px;width:75.00px;padding-top:6.50px"><span style="letter-spacing:0.34px">-70.55</span></div>
<div class="dcell k11" style="top:527.40px;left:799.00px;width:76.00px;padding-top:6.50px"><span style="letter-spacing:0.70px">07-03-2024</span></div>
<div class="dcell k12" style="top:527.40px;left:875.00px;width:75.00px;padding-top:6.50px"><span style="letter-spacing:0.70px">07-03-2024</span></div>
<div class="dcell k13" style="top:527.40px;left:950.00px;width:136.00px;padding-top:6.50px"><span style="letter-spacing:0.53px">A vencer 0 a 1 mes</span></div>
<div class="dcell k14" style="top:527.40px;left:1086.00px;width:76.00px;padding-top:6.50px"><span style="letter-spacing:0.15px">FC</span></div>
<div class="dcell r k15" style="top:527.40px;left:1162.00px;width:76.00px;padding-top:6.50px"><span style="letter-spacing:1.34px">0</span></div>
<div class="dcell k16" style="top:527.40px;left:1238.00px;width:76.00px;padding-top:6.50px"><span style="letter-spacing:-0.35px">10</span></div>
<div class="drow" style="top:552.54px;background:#f7f7f7"></div>
<div class="wcol" style="top:552.54px;left:119.00px;width:75.00px"></div>
<div class="wcol" style="top:552.54px;left:572.00px;width:76.00px"></div>
<div class="wcol" style="top:552.54px;left:648.00px;width:76.00px"></div>
<div class="wcol" style="top:552.54px;left:724.00px;width:75.00px"></div>
<div class="wcol" style="top:552.54px;left:1162.00px;width:76.00px"></div>
<div class="rcb" style="top:558.54px"></div>
<div class="dcell k2" style="top:552.54px;left:119.00px;width:75.00px;padding-top:6.56px"><span style="letter-spacing:0.70px">26-02-2024</span></div>
<div class="dcell k3" style="top:552.54px;left:194.00px;width:76.00px;padding-top:6.56px"><span style="letter-spacing:0.70px">26-02-2024</span></div>
<div class="dcell k4" style="top:552.54px;left:270.00px;width:76.00px;padding-top:6.56px"><span style="letter-spacing:0.16px">FC - 2481</span></div>
<div class="dcell k5" style="top:552.54px;left:346.00px;width:75.00px;padding-top:6.56px"><span style="letter-spacing:0.60px">A-00150-00001</span></div>
<div class="dcell k6" style="top:552.54px;left:421.00px;width:76.00px;padding-top:6.56px"><span style="letter-spacing:0.71px">Proveedores</span></div>
<div class="dcell k7" style="top:552.54px;left:497.00px;width:75.00px;padding-top:6.56px"><span style="letter-spacing:0.45px">Pesos</span></div>
<div class="dcell r k8" style="top:552.54px;left:572.00px;width:76.00px;padding-top:6.56px"><span style="letter-spacing:0.74px">-605.00</span></div>
<div class="dcell r k9" style="top:552.54px;left:648.00px;width:76.00px;padding-top:6.56px"><span style="letter-spacing:0.74px">-605.00</span></div>
<div class="dcell r k10" style="top:552.54px;left:724.00px;width:75.00px;padding-top:6.56px"><span style="letter-spacing:-0.02px">-0.71</span></div>
<div class="dcell k11" style="top:552.54px;left:799.00px;width:76.00px;padding-top:6.56px"><span style="letter-spacing:0.70px">07-03-2024</span></div>
<div class="dcell k12" style="top:552.54px;left:875.00px;width:75.00px;padding-top:6.56px"><span style="letter-spacing:0.70px">07-03-2024</span></div>
<div class="dcell k13" style="top:552.54px;left:950.00px;width:136.00px;padding-top:6.56px"><span style="letter-spacing:0.53px">A vencer 0 a 1 mes</span></div>
<div class="dcell k14" style="top:552.54px;left:1086.00px;width:76.00px;padding-top:6.56px"><span style="letter-spacing:0.15px">FC</span></div>
<div class="dcell r k15" style="top:552.54px;left:1162.00px;width:76.00px;padding-top:6.56px"><span style="letter-spacing:1.34px">0</span></div>
<div class="dcell k16" style="top:552.54px;left:1238.00px;width:76.00px;padding-top:6.56px"><span style="letter-spacing:-0.35px">10</span></div>
</div>
<div class="a" style="left:0;top:566px;width:1257px;height:1px;background:#fff"></div>
<div class="a" style="left:0;top:567px;width:1257px;height:2px;background:#ededed"></div>
<div class="a" style="left:1255px;top:246px;width:2px;height:323px;background:#eeeeee"></div>
</body></html>
